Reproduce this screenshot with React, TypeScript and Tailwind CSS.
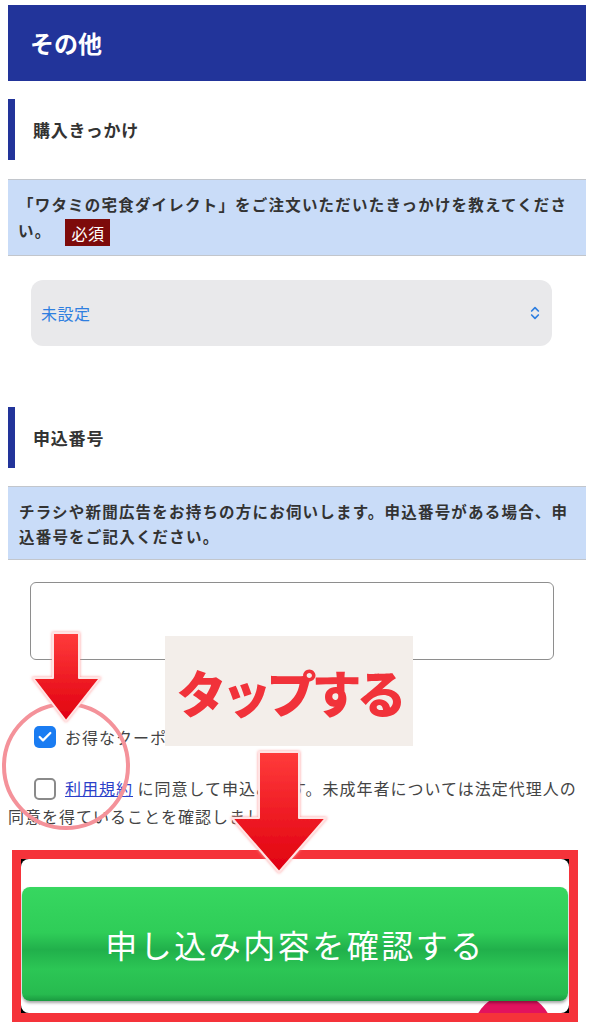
import { ChevronsUpDown, Check } from 'lucide-react';

const FONT = "[font-family:'Noto_Sans_CJK_JP','Liberation_Sans',sans-serif]";

function SectionHeading({ label }: { label: string }) {
  return (
    <div className="flex h-[61px] items-center border-l-[7px] border-[#22349a] pl-[18px] text-[17px] font-bold tracking-[0.8px] text-[#333]">
      {label}
    </div>
  );
}

function Overlay() {
  return (
    <svg
      className="pointer-events-none absolute left-0 top-0"
      width={594}
      height={1024}
      viewBox="0 0 594 1024"
    >
      <defs>
        <linearGradient id="arrowFill" x1="0" y1="0" x2="0" y2="1">
          <stop offset="0%" stopColor="#ff3b3b" />
          <stop offset="100%" stopColor="#e0000f" />
        </linearGradient>
        <filter id="glow" x="-30%" y="-30%" width="160%" height="160%">
          <feDropShadow dx="0" dy="0" stdDeviation="1.5" floodColor="#ff9a9a" />
        </filter>
      </defs>
      {/* pink circle around the checkbox */}
      <circle cx="66" cy="766" r="62" fill="none" stroke="#f4929a" strokeWidth="4" />
      {/* left arrow */}
      <polygon
        points="53,633 79,633 79,678 100,678 66,721 33,678 53,678"
        fill="url(#arrowFill)"
        stroke="#ffe4e4"
        strokeWidth="2"
        strokeLinejoin="round"
        filter="url(#glow)"
      />
      {/* center arrow */}
      <polygon
        points="259,752 299,752 299,818 326,818 279,872 232,818 259,818"
        fill="url(#arrowFill)"
        stroke="#ffe4e4"
        strokeWidth="2"
        strokeLinejoin="round"
        filter="url(#glow)"
      />
    </svg>
  );
}

export default function App() {
  return (
    <div className={`relative h-[1024px] w-[594px] overflow-hidden bg-white ${FONT}`}>
      <div className="px-[8px] pt-[5px]">
        {/* Page header */}
        <div className="flex h-[76px] items-center bg-[#22349a] pl-[22px] text-[24px] font-bold text-white">
          その他
        </div>

        {/* 購入きっかけ */}
        <div className="mt-[18px]">
          <SectionHeading label="購入きっかけ" />
        </div>
        <div className="mt-[19px] border-y border-[#c2c6cc] bg-[#c9dcf8] px-[10px] pb-[9px] pt-[11px] text-[15.5px] font-bold leading-[26px] tracking-[1.2px] text-[#333]">
          「ワタミの宅食ダイレクト」をご注文いただいたきっかけを教えてください。
          <span className="ml-[14px] inline-flex h-[27px] items-center bg-[#7d0b0b] px-[6px] align-middle text-[16px] font-normal leading-none tracking-[0.5px] text-white">
            必須
          </span>
        </div>

        <div className="ml-[23px] mt-[24px] flex h-[66px] w-[521px] items-center justify-between rounded-[12px] bg-[#e9e9eb] pl-[10px] pr-[9px]">
          <span className="text-[16px] tracking-[0.5px] text-[#2f7fe0]">未設定</span>
          <ChevronsUpDown size={16} strokeWidth={2.6} className="text-[#2f7fe0]" />
        </div>

        {/* 申込番号 */}
        <div className="mt-[61px]">
          <SectionHeading label="申込番号" />
        </div>
        <div className="mt-[18px] border-y border-[#c2c6cc] bg-[#c9dcf8] px-[11px] pb-[10px] pt-[12px] text-[15.5px] font-bold leading-[25px] tracking-[1.2px] text-[#333]">
          チラシや新聞広告をお持ちの方にお伺いします。申込番号がある場合、申込番号をご記入ください。
        </div>

        <div className="ml-[22px] mt-[22px] h-[78px] w-[524px] rounded-[6px] border border-[#8e8e8e] bg-white" />

        {/* Checkboxes */}
        <div className="mt-[64px] flex items-center text-[16px] leading-[26px] tracking-[1px] text-[#444]">
          <span className="ml-[26px] mr-[9px] flex h-[22px] w-[22px] items-center justify-center rounded-[5px] bg-[#1a7cf2]">
            <Check size={16} strokeWidth={3.4} className="text-white" />
          </span>
          お得なクーポン等の情報を受け取る
        </div>
        <p className="mt-[24px] text-[16px] leading-[28px] tracking-[1px] text-[#444]">
          <span className="ml-[26px] mr-[9px] inline-block h-[22px] w-[22px] rounded-[5px] border-[2px] border-[#8a8a8a] align-[-5px]" />
          <a className="text-[#2b3fc9] underline">利用規約</a>
          {' に同意して申込みます。未成年者については法定代理人の同意を得ていることを確認しました。'}
        </p>

        {/* Highlighted submit area */}
        <div className="ml-[4px] mt-[20px] w-[566px] border-[9px] border-[#f5333a] bg-black">
          <div className="relative overflow-hidden rounded-[8px] bg-white pb-[12px] pt-[28px]">
            <div className="absolute left-[452px] top-[134px] h-[80px] w-[80px] rounded-full bg-[#e2125e]" />
            <div className="relative mx-[1px] flex h-[114px] items-center justify-center rounded-[8px] bg-[linear-gradient(180deg,#37d760_0%,#2fcd58_40%,#21b04b_55%,#2cc655_72%,#27bb4f_94%,#1a9a40_100%)] text-[32px] tracking-[2.5px] text-white shadow-[0_2px_3px_rgba(0,0,0,0.35)]">
              申し込み内容を確認する
            </div>
          </div>
        </div>
      </div>

      {/* Annotation: tap label */}
      <div className="absolute left-[165px] top-[636px] flex h-[110px] w-[248px] items-center justify-center bg-[#f3eeea]">
        <span className="text-[50px] font-black tracking-[-5px] text-[#f1323a]">タップする</span>
      </div>
      <Overlay />
    </div>
  );
}
